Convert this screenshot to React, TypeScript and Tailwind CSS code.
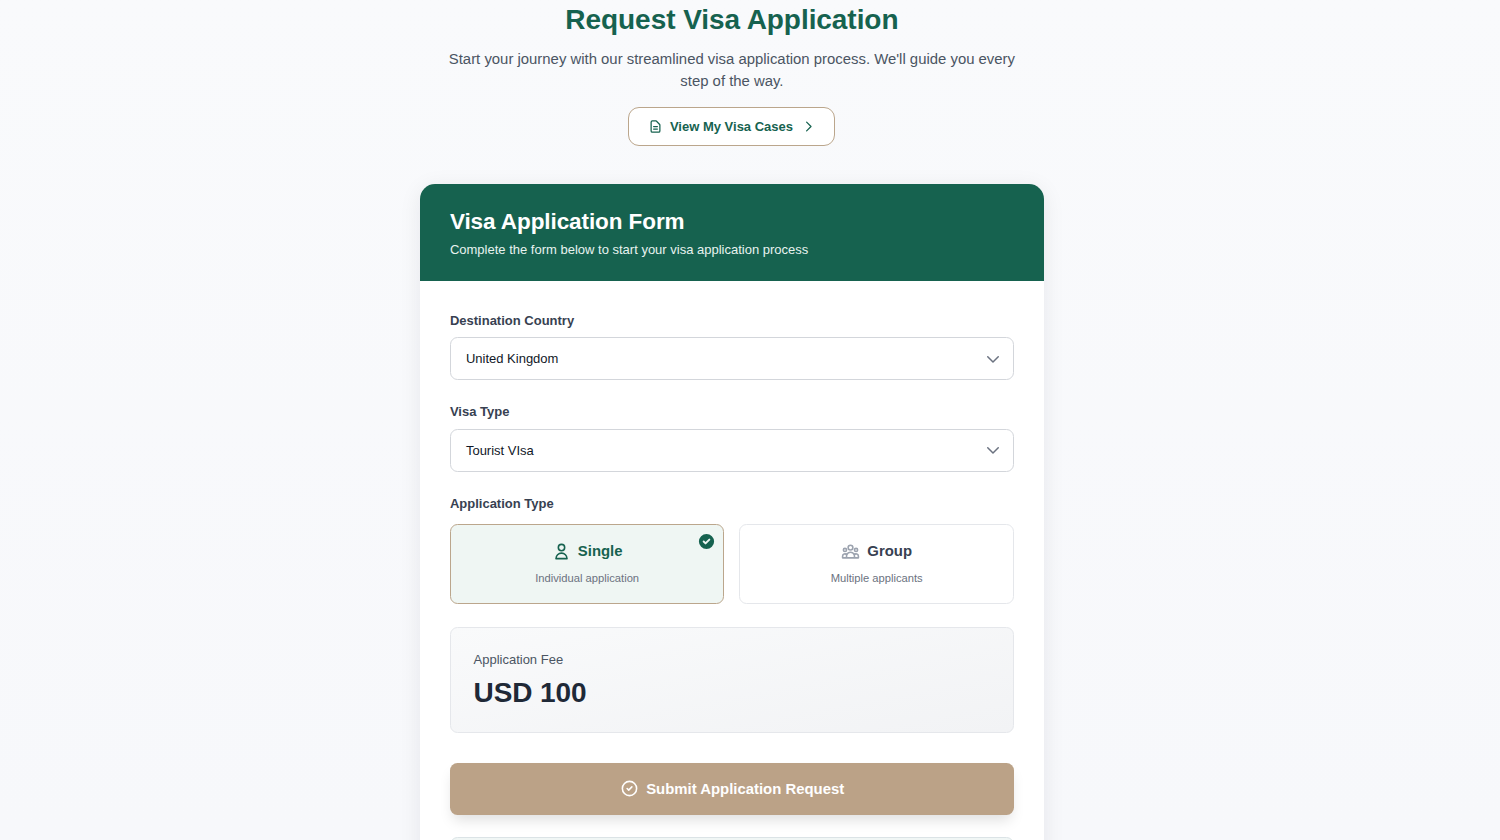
import React from "react";
import {
  HiOutlineDocumentText,
  HiOutlineChevronRight,
  HiOutlineChevronDown,
  HiOutlineUser,
  HiOutlineUserGroup,
  HiOutlineCheckCircle,
  HiCheckCircle,
} from "react-icons/hi";

function SelectField({ label, value }: { label: string; value: string }) {
  return (
    <div>
      <div className="text-[13px] font-bold leading-[19px] text-[#374151]">{label}</div>
      <button
        type="button"
        className="mt-[7.5px] flex h-[43px] w-full items-center justify-between rounded-[7.5px] border border-[#d3d6db] bg-white pl-[15px] pr-[11px] text-left text-[13px] text-[#111827]"
      >
        <span>{value}</span>
        <HiOutlineChevronDown className="size-[18px] text-[#6b7280]" />
      </button>
    </div>
  );
}

export default function App() {
  return (
    <div className="flex h-[840px] w-[1500px] justify-center overflow-hidden bg-linear-to-b from-[#f9fafc] to-[#f7f8fb] pr-[36.2px] font-['Liberation_Sans',Arial,sans-serif]">
      <div className="flex w-[624px] shrink-0 flex-col items-center">
        <h1 className="mt-[2px] text-[28px] font-bold leading-[36px] tracking-[-0.06px] text-[#16624f]">Request Visa Application</h1>
        <p className="mt-[9.5px] w-[600px] text-center text-[14.9px] leading-[22.5px] text-[#4b5563]">
          Start your journey with our streamlined visa application process. We'll guide you every
          <br />
          step of the way.
        </p>
        <button
          type="button"
          className="mt-[14.5px] mr-px flex h-[39px] w-[207px] shrink-0 items-center rounded-[11px] border border-[#bba68c] bg-white pl-[19px] text-[13px] font-bold text-[#16624f]"
        >
          <HiOutlineDocumentText className="size-[15px]" />
          <span className="ml-[7px] pt-px">View My Visa Cases</span>
          <HiOutlineChevronRight className="ml-[8px] size-[15px]" />
        </button>

        <section className="mt-[38.3px] h-[800px] w-full shrink-0 overflow-hidden rounded-[15px] bg-white shadow-[0_4px_22px_rgba(15,23,42,0.08)]">
          <header className="h-[96.8px] bg-[#16624f] px-[30px] pt-[22.3px] text-white">
            <h2 className="text-[22.5px] font-bold leading-[30px] tracking-[-0.08px]">Visa Application Form</h2>
            <p className="mt-[3.2px] text-[13px] leading-[19px] text-[#e8f3ef]">
              Complete the form below to start your visa application process
            </p>
          </header>
          <div className="px-[30px] pt-[29.9px]">
            <SelectField label="Destination Country" value="United Kingdom" />
            <div className="mt-[22px]">
              <SelectField label="Visa Type" value="Tourist VIsa" />
            </div>
            <div className="mt-[22px] text-[13px] font-bold leading-[19px] text-[#374151]">Application Type</div>
            <div className="mt-[11px] grid grid-cols-2 gap-[15px]">
              <div className="relative h-[80px] rounded-[7.5px] border border-[#bba68c] bg-[#eff6f3] pt-[15px] text-center">
                <div className="flex h-[23px] items-center justify-center gap-[7px] text-[14.9px] font-bold text-[#16624f]">
                  <HiOutlineUser className="size-[19px]" />
                  Single
                </div>
                <div className="mt-[8px] text-[11.2px] leading-[15px] text-[#6b7280]">Individual application</div>
                <HiCheckCircle className="absolute right-[7.5px] top-[7.5px] size-[19px] text-[#16624f]" />
              </div>
              <div className="h-[80px] rounded-[7.5px] border border-[#e5e7eb] bg-white pt-[15px] text-center">
                <div className="flex h-[23px] items-center justify-center gap-[7px] text-[14.9px] font-bold text-[#374151]">
                  <HiOutlineUserGroup className="size-[19px] text-[#9ca3af]" />
                  Group
                </div>
                <div className="mt-[8px] text-[11.2px] leading-[15px] text-[#6b7280]">Multiple applicants</div>
              </div>
            </div>
            <div className="mt-[23px] h-[106px] rounded-[7.5px] border border-[#e5e7eb] bg-linear-to-br from-[#f9fafb] to-[#f2f3f5] px-[22.6px] pt-[22px]">
              <div className="text-[13px] leading-[19px] text-[#4b5563]">Application Fee</div>
              <div className="mt-[6px] text-[28px] font-bold leading-[36px] tracking-[-0.08px] text-[#1f2937]">USD 100</div>
            </div>
            <button
              type="button"
              className="mt-[30px] flex h-[52px] w-full items-center justify-center gap-[7.5px] rounded-[7.5px] bg-[#bba287] text-[14.9px] font-bold text-white shadow-[0_8px_14px_-3px_rgba(0,0,0,0.13)]"
            >
              <HiOutlineCheckCircle className="size-[19px]" />
              Submit Application Request
            </button>
            <div className="mt-[22px] h-[60px] rounded-[7.5px] border border-[#dbe3e6] bg-[#f0f6f5]" />
          </div>
        </section>
      </div>
    </div>
  );
}
